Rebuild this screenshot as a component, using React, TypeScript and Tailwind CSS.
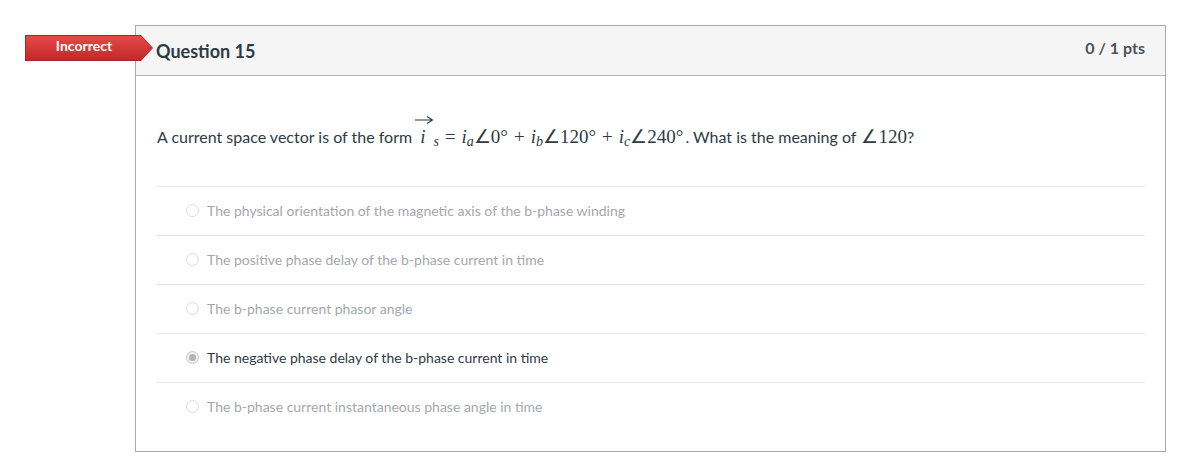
import React from "react";

const options = [
  { text: "The physical orientation of the magnetic axis of the b-phase winding", selected: false },
  { text: "The positive phase delay of the b-phase current in time", selected: false },
  { text: "The b-phase current phasor angle", selected: false },
  { text: "The negative phase delay of the b-phase current in time", selected: true },
  { text: "The b-phase current instantaneous phase angle in time", selected: false },
];

function Radio({ selected }: { selected: boolean }) {
  if (selected) {
    return (
      <span className="w-[13px] h-[13px] rounded-full border border-[#c8c8c8] bg-[#f0f0f0] flex items-center justify-center">
        <span className="w-[7px] h-[7px] rounded-full bg-[#b5b5b5]" />
      </span>
    );
  }
  return <span className="w-[13px] h-[13px] rounded-full border border-[#dcdcdc] bg-white" />;
}

function Math() {
  const m = "font-['Liberation_Serif',serif] text-[19px] text-[#2d3b45]";
  return (
    <span className={`${m} inline-flex items-baseline ml-[6px] mr-[2px]`}>
      <span className="relative inline-block italic pl-[2px]">
        i
        <svg className="absolute left-[-4px] top-[-8px]" width="20" height="10" viewBox="0 0 20 10">
          <path d="M1 5 H18 M13 1.5 L18.5 5 L13 8.5" fill="none" stroke="#2d3b45" strokeWidth="1.1" />
        </svg>
      </span>
      <span className="italic text-[14px] ml-[8px] relative top-[3px]">s</span>
      <span className="mx-[6px]">=</span>
      <span className="italic">i</span>
      <span className="italic text-[14px] relative top-[3px]">a</span>
      <span>∠0°</span>
      <span className="mx-[6px]">+</span>
      <span className="italic">i</span>
      <span className="italic text-[14px] relative top-[3px]">b</span>
      <span>∠120°</span>
      <span className="mx-[6px]">+</span>
      <span className="italic">i</span>
      <span className="italic text-[14px] relative top-[3px]">c</span>
      <span>∠240°</span>
    </span>
  );
}

export default function App() {
  return (
    <div className="w-[1193px] h-[462px] bg-white font-['Lato','Noto_Sans',sans-serif] relative">
      <div className="pt-[25px] pl-[135px]">
        <div className="w-[1031px] h-[427px] border border-[#a8a8a8] bg-white flex flex-col">
          <div className="h-[50px] bg-[#f5f5f5] border-b border-[#b5b5b5] flex items-start justify-between px-[20px] shrink-0">
            <div className="text-[18px] font-bold text-[#2d3b45] pt-[12px]">Question 15</div>
            <div className="text-[16px] font-bold text-[#4a545c] pt-[10px]">0 / 1 pts</div>
          </div>
          <div className="px-[20px] pt-[47px]">
            <div className="text-[16px] text-[#2d3b45] flex items-baseline h-[50px] pl-px">
              <span>A current space vector is of the form</span>
              <Math />
              <span>. What is the meaning of </span>
              <span className="font-['Liberation_Serif',serif] text-[19px] ml-[5px]">∠120</span>
              <span>?</span>
            </div>
            <div className="mt-[13px]">
              {options.map((o, i) => (
                <div key={i} className="h-[49px] border-t border-[#e6e8ea] flex items-center pl-[30px] gap-[8px] pb-[2px]">
                  <Radio selected={o.selected} />
                  <span className={`text-[14px] ${o.selected ? "text-[#2d3b45]" : "text-[#a3a8ad]"}`}>{o.text}</span>
                </div>
              ))}
            </div>
          </div>
        </div>
      </div>
      <div className="absolute left-[25px] top-[35px] w-[128px] h-[26px] [clip-path:polygon(0_0,116px_0,100%_50%,116px_100%,0_100%)] bg-[#a82424]">
        <div className="absolute inset-[1px] [clip-path:polygon(0_0,115px_0,100%_50%,115px_100%,0_100%)] bg-gradient-to-b from-[#e64848] to-[#c22828] flex items-center pb-[4px]">
          <span className="w-[116px] text-center text-white text-[14px] font-bold leading-none">Incorrect</span>
        </div>
      </div>
    </div>
  );
}
